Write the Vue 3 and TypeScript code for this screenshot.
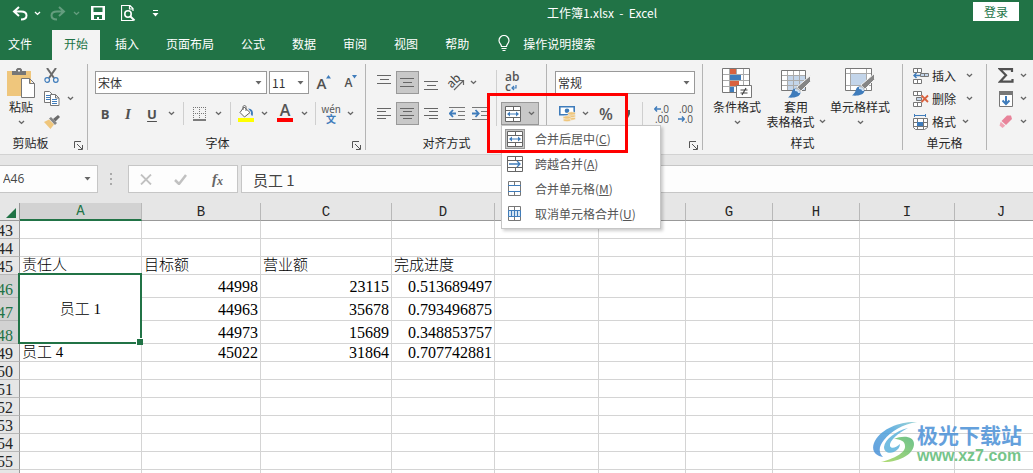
<script setup lang="ts">
import { ref } from 'vue'

interface SheetRow {
  n: number
  tall?: boolean
  selected?: boolean
  a?: string
  span?: number
  covered?: boolean
  cells: string[]
  heading?: boolean
}

const tabs = ['插入', '页面布局', '公式', '数据', '审阅', '视图', '帮助']
const columns = ['A', 'B', 'C', 'D', '', '', 'G', 'H', 'I', 'J']
const fontName = ref('宋体')
const fontSize = ref('11')
const numberFormat = ref('常规')
const cellName = ref('A46')
const formula = ref('员工 1')

const mergeItems = [
  { icon: 'merge-center', text: '合并后居中', key: 'C', active: true },
  { icon: 'merge-across', text: '跨越合并', key: 'A', active: false },
  { icon: 'merge-cells', text: '合并单元格', key: 'M', active: false },
  { icon: 'unmerge', text: '取消单元格合并', key: 'U', active: false },
]

const blank = (n: number): SheetRow => ({ n, cells: ['', '', ''] })
const rows: SheetRow[] = [
  blank(43),
  blank(44),
  { n: 45, a: '责任人', cells: ['目标额', '营业额', '完成进度'], heading: true },
  { n: 46, a: '员工 1', span: 3, tall: true, selected: true, cells: ['44998', '23115', '0.513689497'] },
  { n: 47, covered: true, tall: true, selected: true, cells: ['44963', '35678', '0.793496875'] },
  { n: 48, covered: true, tall: true, selected: true, cells: ['44973', '15689', '0.348853757'] },
  { n: 49, a: '员工 4', cells: ['45022', '31864', '0.707742881'] },
  ...[50, 51, 52, 53, 54, 55].map(blank),
]
</script>

<template>
  <div class="excel">
    <svg class="defs" aria-hidden="true">
      <symbol id="chev" viewBox="0 0 7 5"><path d="M1 1l2.5 2.4L6 1" fill="none" stroke="currentColor" stroke-width="1.4" /></symbol>
      <symbol id="tri" viewBox="0 0 7 4"><path d="M0.5 0h6L3.5 3.6z" fill="currentColor" /></symbol>
      <symbol id="launch" viewBox="0 0 9 9">
        <path d="M0.5 7V0.5H7M3 3l5 5M8.500 4v4.500H4" fill="none" stroke="#555" />
      </symbol>
      <symbol id="merge-center" viewBox="0 0 16 16">
        <path d="M0.5 0.500h15v15h-15zM0.500 4.500h15M0.500 11.500h15M8.500 0.500v4M8.500 11.500v4" fill="#fff" stroke="#666" />
        <path d="M3 8h10" stroke="#3f7cbb" /><path d="M2 8l3-2.500v5zM14 8l-3-2.500v5z" fill="#3f7cbb" />
      </symbol>
      <symbol id="merge-across" viewBox="0 0 16 16">
        <path d="M0.500 0.500h15v15h-15zM0.500 4.500h15M0.500 11.500h15M8.500 0.500v4M8.500 11.500v4" fill="#fff" stroke="#666" />
        <path d="M2 8h11M10 5l3 3-3 3" fill="none" stroke="#3f7cbb" stroke-width="1.300" />
      </symbol>
      <symbol id="merge-cells" viewBox="0 0 16 16">
        <path d="M1.500 0.500h12v14h-12zM7.500 0.500v4M7.500 10.500v4" fill="#fff" stroke="#777" />
        <path d="M1 4.500h13M1 10.500h13" stroke="#3f7cbb" />
      </symbol>
      <symbol id="unmerge" viewBox="0 0 16 16">
        <path d="M1.500 0.500h12v14h-12zM7.500 0.500v14" fill="#fff" stroke="#777" />
        <path d="M1.500 4.500h12v6h-12zM4.500 4.500v6M7.500 4.500v6M10.500 4.500v6" fill="#d5e5f4" stroke="#3f7cbb" />
      </symbol>
      <symbol id="brush" viewBox="0 0 23 23">
        <path d="M22.500 0.500v6L13 16l-4-4z" fill="#858585" stroke="#f3f3f3" />
        <path d="M9 12l4 4-2 2-4-4z" fill="#b9b9b9" />
        <path d="M7.500 13.500c-3 0-3.500 3-4 4.500S1.500 21 0 22.500c5 .5 12 0 12.500-5z" fill="#3f7cbb" />
        <path d="M7 15c2 0 4 1 4 3" stroke="#cfe2f5" stroke-width="2" fill="none" />
      </symbol>
    </svg>

    <header class="titlebar">
      <div class="quick">
        <button aria-label="撤消">
          <svg width="16" height="15"><path d="M7 1L2 5.500 7 10M2 5.500h7c3.500 0 5.500 1.500 5.500 4S12.500 13.500 9 13.500" fill="none" stroke="#fff" stroke-width="2" /></svg>
        </button>
        <button aria-label="撤消选项"><svg class="chev"><use href="#chev" /></svg></button>
        <button aria-label="恢复" class="dim">
          <svg width="16" height="15"><path d="M9 1l5 4.500L9 10M14 5.500H7c-3.500 0-5.500 1.500-5.500 4S3.500 13.500 7 13.500" fill="none" stroke="#fff" stroke-width="2" /></svg>
        </button>
        <button aria-label="恢复选项" class="dim"><svg class="chev"><use href="#chev" /></svg></button>
        <button aria-label="保存">
          <svg width="14" height="14"><path d="M0 0h14v14H0z" fill="#fff" /><path d="M2.500 1.500h9v4.500h-9zM3 9h8v4H8v-2H6v2H3z" fill="#217346" /></svg>
        </button>
        <button aria-label="打印预览">
          <svg width="15" height="17" fill="none" stroke="#fff"><path d="M4 15.500H0.500V0.500h8.500l3 3V6M8.500 0.500v3.500H12M4 15.500h8" stroke-width="1.200" /><circle cx="7" cy="9" r="3.200" stroke-width="1.600" /><path d="M9.500 11.500l4 4" stroke-width="2" /></svg>
        </button>
        <button aria-label="自定义快速访问工具栏">
          <svg width="7" height="7"><path d="M1 0h5v1H1zM0.500 3h6L3.500 6.500z" fill="#fff" /></svg>
        </button>
      </div>
      <h1>工作簿1.xlsx&nbsp; -&nbsp; Excel</h1>
      <button class="login">登录</button>
    </header>

    <nav class="tabs">
      <button class="file">文件</button>
      <button class="active">开始</button>
      <button v-for="t in tabs" :key="t">{{ t }}</button>
      <button class="tell">
        <svg width="12" height="17" fill="none" stroke="#fff"><path d="M3.500 11.500C3.500 9 1 8.500 1 5.500a5 5 0 0 1 10 0c0 3-2.500 3.500-2.500 6zM3.500 13.500h5M4.500 15.500h3" stroke-width="1.200" /></svg>
        <span>操作说明搜索</span>
      </button>
    </nav>

    <section class="ribbon">
      <div class="group clip">
        <div class="body">
          <button class="big">
            <svg width="28" height="30">
              <path d="M0 3h24v25H0z" fill="#efc67c" /><path d="M5 7V3h4V1.500L10.500 0h3L15 1.500V3h4v4z" fill="#777" /><path d="M11 2h2v1.500h-2z" fill="#f3f3f3" />
              <path d="M14.500 10.500h8l5 5v14h-13zM22.500 10.500v5h5" fill="#fff" stroke="#777" />
            </svg>
            <span>粘贴</span>
            <svg class="chev"><use href="#chev" /></svg>
          </button>
          <div class="stack">
            <button aria-label="剪切">
              <svg width="15" height="15" fill="none"><path d="M3 0l7 10M12 0L5 10" stroke="#6b6b6b" stroke-width="2" /><circle cx="3.200" cy="12" r="2.300" stroke="#3f7cbb" stroke-width="1.200" /><circle cx="11.800" cy="12" r="2.300" stroke="#3f7cbb" stroke-width="1.200" /></svg>
            </button>
            <button aria-label="复制" class="split">
              <svg width="16" height="15"><path d="M0.500 0.500h5l3 3v8h-8z" fill="#fff" stroke="#777" /><path d="M2 4.500h4M2 6.500h4M2 8.500h4" stroke="#3f7cbb" /><path d="M6.500 3.500h5l3.500 3.500v7.500H6.500zM11.500 3.500V7H15" fill="#fff" stroke="#777" /><path d="M8 8.500h5M8 10.500h5M8 12.500h5" stroke="#3f7cbb" /></svg>
              <svg class="chev"><use href="#chev" /></svg>
            </button>
            <button aria-label="格式刷">
              <svg width="16" height="14"><path d="M0 7l5-2.500 5 5L6.500 14z" fill="#efc67c" /><path d="M5 3.500l2-1.500 6 6-2 2z" fill="#858585" /><path d="M9 4l5-4 2 2-4.500 4.500z" fill="#6b6b6b" /></svg>
            </button>
          </div>
        </div>
        <footer><span>剪贴板</span><button aria-label="剪贴板设置"><svg width="9" height="9"><use href="#launch" /></svg></button></footer>
      </div>

      <div class="group font">
        <div class="lines">
          <div class="line fields">
            <label class="combo">
              <select v-model="fontName" aria-label="字体"><option>宋体</option></select>
              <svg class="tri"><use href="#tri" /></svg>
            </label>
            <label class="combo">
              <select v-model="fontSize" aria-label="字号"><option>11</option></select>
              <svg class="tri"><use href="#tri" /></svg>
            </label>
            <button class="grow" aria-label="增大字号">A<svg width="5" height="4"><path d="M0 3.500L2.500 0 5 3.500z" fill="#3f7cbb" /></svg></button>
            <button class="grow less" aria-label="减小字号">A<svg width="5" height="4"><path d="M0 0h5L2.500 3.500z" fill="#3f7cbb" /></svg></button>
          </div>
          <div class="line font-tools">
            <button class="letter">B</button>
            <button class="letter italic">I</button>
            <button class="letter under">U</button>
            <button aria-label="下划线选项"><svg class="chev"><use href="#chev" /></svg></button>
            <i class="bar"></i>
            <button aria-label="边框"><svg width="13" height="14" fill="none" stroke="#777"><path d="M0.500 0v12M6.500 0v12M12.500 0v12M0 0.500h13M0 6.500h13" stroke-dasharray="1 1" /><path d="M0 13h13" stroke="#555" stroke-width="1.500" /></svg></button>
            <button aria-label="边框选项"><svg class="chev"><use href="#chev" /></svg></button>
            <i class="bar"></i>
            <button aria-label="填充颜色"><svg width="17" height="17"><path d="M6 2l6 5.500-5.500 4.500L2 7.500z" fill="#fff" stroke="#666" /><path d="M5 5V2c0-2 3-2 3 0v4" fill="none" stroke="#666" /><path d="M10 3.500c4 0 6 3 4.500 7.500-1.500-.5-2-2-1.500-4z" fill="#3f7cbb" /><path d="M0 13h16v4H0z" fill="#ff0" /></svg></button>
            <button aria-label="填充颜色选项"><svg class="chev"><use href="#chev" /></svg></button>
            <button class="colour" aria-label="字体颜色">A</button>
            <button aria-label="字体颜色选项"><svg class="chev"><use href="#chev" /></svg></button>
            <i class="bar"></i>
            <button class="pinyin"><span>wén</span><b>文</b></button>
            <button aria-label="拼音选项"><svg class="chev"><use href="#chev" /></svg></button>
          </div>
        </div>
        <footer><span>字体</span><button aria-label="字体设置"><svg width="9" height="9"><use href="#launch" /></svg></button></footer>
      </div>

      <div class="group align">
        <div class="body">
          <div class="align-tools">
            <button aria-label="顶端对齐"><svg width="15" height="15" stroke="#666"><path d="M0 0.500h14M3 4.500h9M0 8.500h14" /></svg></button>
            <button aria-label="垂直居中" class="on"><svg width="15" height="15" stroke="#666"><path d="M0 3.500h14M3 7.500h9M0 11.500h14" /></svg></button>
            <button aria-label="底端对齐"><svg width="15" height="15" stroke="#666"><path d="M0 6.500h14M3 10.500h9M0 14.500h14" /></svg></button>
            <button aria-label="方向"><svg class="turn" width="17" height="16"><text x="0" y="11" font-size="12" fill="#444" transform="rotate(-45 5 8)">ab</text><path d="M6 15l9-9M11 5.500h4.500V10" fill="none" stroke="#666" stroke-width="1.200" /></svg></button>
            <button aria-label="方向选项" class="start"><svg class="chev"><use href="#chev" /></svg></button>
            <button aria-label="左对齐"><svg width="15" height="13" stroke="#666"><path d="M0 1h14M0 4.500h9M0 8h14M0 11.500h9" shape-rendering="crispEdges" /></svg></button>
            <button aria-label="居中" class="on"><svg width="15" height="13" stroke="#666"><path d="M0 1h14M3 4.500h9M0 8h14M3 11.500h9" shape-rendering="crispEdges" /></svg></button>
            <button aria-label="右对齐"><svg width="15" height="13" stroke="#666"><path d="M0 1h14M5 4.500h9M0 8h14M5 11.500h9" shape-rendering="crispEdges" /></svg></button>
            <button aria-label="减少缩进"><svg width="16" height="13"><path d="M0 0.500h16M9 4.500h7M9 8.500h7M0 12.500h16" stroke="#777" /><path d="M1 6.500h6M4 3L0.800 6.500 4 10" stroke="#3f7cbb" stroke-width="1.800" fill="none" /></svg></button>
            <button aria-label="增加缩进"><svg width="16" height="13"><path d="M0 0.500h16M9 4.500h7M9 8.500h7M0 12.500h16" stroke="#777" /><path d="M0 6.500h6M3.500 3L6.700 6.500 3.500 10" stroke="#3f7cbb" stroke-width="1.800" fill="none" /></svg></button>
          </div>
          <i class="bar long"></i>
          <div class="merge-col">
            <button class="wrap" aria-label="自动换行"><span>ab</span><span>c<svg width="6" height="8"><path d="M5 1v3H1M3 2L1 4l2 2" fill="none" stroke="#3f7cbb" stroke-width="1.200" /></svg></span></button>
            <div class="merge">
              <button class="on" aria-label="合并后居中" aria-expanded="true">
                <svg width="16" height="16"><use href="#merge-center" /></svg>
                <svg class="chev"><use href="#chev" /></svg>
              </button>
              <div class="menu" role="menu">
                <button v-for="m in mergeItems" :key="m.key" role="menuitem">
                  <span class="pic" :class="{ chosen: m.active }"><svg width="16" height="16"><use :href="'#' + m.icon" /></svg></span>
                  <span>{{ m.text }}(<u>{{ m.key }}</u>)</span>
                </button>
              </div>
              <div class="marker"></div>
            </div>
          </div>
        </div>
        <footer><span>对齐方式</span></footer>
      </div>

      <div class="group number">
        <div class="lines">
          <div class="line">
            <label class="combo">
              <select v-model="numberFormat" aria-label="数字格式"><option>常规</option></select>
              <svg class="tri"><use href="#tri" /></svg>
            </label>
          </div>
          <div class="line number-tools">
            <button aria-label="会计数字格式"><svg width="17" height="16"><path d="M0.800 0.800h14.400v8H0.800z" fill="#fff" stroke="#3f7cbb" stroke-width="1.600" /><circle cx="8" cy="4.800" r="2.300" fill="#3f7cbb" /><g fill="#efc67c" stroke="#f3f3f3" stroke-width=".6"><ellipse cx="12.500" cy="12.500" rx="4" ry="1.700" /><ellipse cx="12.500" cy="10" rx="4" ry="1.700" /><ellipse cx="12.500" cy="7.500" rx="4" ry="1.700" /><ellipse cx="8" cy="14" rx="4" ry="1.700" /><ellipse cx="8" cy="11.500" rx="4" ry="1.700" /></g></svg></button>
            <button aria-label="会计格式选项"><svg class="chev"><use href="#chev" /></svg></button>
            <button class="percent">%</button>
            <button class="comma" aria-label="千位分隔样式"><svg width="6" height="8"><path d="M1 0h4v4L3 8H1l1-4H1z" fill="#555" /></svg></button>
            <i class="bar"></i>
            <button class="dec" aria-label="增加小数位数"><span><svg width="7" height="6"><path d="M0.500 3H7M3 0.500L0.800 3 3 5.500" fill="none" stroke="#3f7cbb" stroke-width="1.400" /></svg>.0</span><span>.00</span></button>
            <button class="dec" aria-label="减少小数位数"><span>.00</span><span><svg width="7" height="6"><path d="M0 3h6.500M4 0.500L6.200 3 4 5.500" fill="none" stroke="#3f7cbb" stroke-width="1.400" /></svg>.0</span></button>
          </div>
        </div>
        <footer><span></span><button aria-label="数字设置"><svg width="9" height="9"><use href="#launch" /></svg></button></footer>
      </div>

      <div class="group styles">
        <div class="body">
          <button class="big">
            <svg width="30" height="30">
              <path d="M0.500 0.500h27v24H0.500z" fill="#fff" /><path d="M8 1h6v5H8zM8 13h9v5H8z" fill="#d9623f" /><path d="M8 7h11v5H8zM8 19h4v5H8z" fill="#3f7cbb" />
              <path d="M7.500 0v25M14.500 0v6M21.500 0v24M0 6.500h28M0 12.500h28M0 18.500h28" stroke="#aaa" fill="none" /><path d="M0.500 0.500h27v24H0.500z" fill="none" stroke="#777" />
              <path d="M14.500 17.500h15v12h-15z" fill="#fff" stroke="#777" /><path d="M18.500 22h7M18.500 25h7M24 20l-4 7" stroke="#444" stroke-width="1.200" />
            </svg>
            <span>条件格式</span>
            <svg class="chev"><use href="#chev" /></svg>
          </button>
          <button class="big">
            <svg width="30" height="30">
              <path d="M0.500 2.500h24v20H0.500z" fill="#fff" /><path d="M7 8h17v14H7z" fill="#c3d5ea" /><path d="M6.500 3v19M12.500 3v19M18.500 3v19M1 7.500h23M1 12.500h23M1 17.500h23" stroke="#aaa" fill="none" /><path d="M0.500 2.500h24v20H0.500z" fill="none" stroke="#777" />
              <use href="#brush" x="7" y="7" width="23" height="23" />
            </svg>
            <span>套用</span>
            <span class="with-chev">表格格式<svg class="chev"><use href="#chev" /></svg></span>
          </button>
          <button class="big">
            <svg width="30" height="30">
              <path d="M0.500 0.500h26v22H0.500z" fill="#fff" /><path d="M6 6h15v11H6z" fill="#c3d5ea" /><path d="M5.500 1v21M21.500 1v21M1 5.500h25M1 17.500h25" stroke="#aaa" fill="none" /><path d="M0.500 0.500h26v22H0.500z" fill="none" stroke="#777" />
              <use href="#brush" x="7" y="5" width="23" height="23" />
            </svg>
            <span>单元格样式</span>
            <svg class="chev"><use href="#chev" /></svg>
          </button>
        </div>
        <footer><span>样式</span></footer>
      </div>

      <div class="group cells">
        <div class="stack">
          <button>
            <svg width="16" height="16" fill="#fff" stroke="#777"><path d="M0.500 0.500h8v4h-8zM4.500 0.500v4M0.500 11.500h8v4h-8zM4.500 11.500v4" /><path d="M7.500 5.500h8v3h-8zM11.500 5.500v3" fill="#c3d5ea" /><path d="M1 7.500h6M3.500 5L1 7.500 3.500 10" fill="none" stroke="#3f7cbb" stroke-width="1.500" /></svg>
            <span>插入</span><svg class="chev"><use href="#chev" /></svg>
          </button>
          <button>
            <svg width="16" height="16" fill="#fff" stroke="#777"><path d="M0.500 0.500h8v4h-8zM4.500 0.500v4M0.500 11.500h8v4h-8zM4.500 11.500v4" /><path d="M3.500 6.500h5v3h-5z" fill="#c3d5ea" /><path d="M8.500 4.500l6.500 6.500M15 4.500l-6.500 6.500" fill="none" stroke="#d9623f" stroke-width="1.800" /></svg>
            <span>删除</span><svg class="chev"><use href="#chev" /></svg>
          </button>
          <button>
            <svg width="16" height="16" fill="none" stroke="#777"><path d="M0.500 4.500h14v9l-3 2h-9l-2-2z" fill="#fff" /><path d="M4.500 4v11M10.500 4v11M0 8.500h15M0 12.500h15" /><path d="M4 8h6v4H4z" fill="#3f7cbb" stroke="none" /><path d="M1.500 0v3M12.500 0v3M2 1.500h10" stroke="#3f7cbb" /></svg>
            <span>格式</span><svg class="chev"><use href="#chev" /></svg>
          </button>
        </div>
        <footer><span>单元格</span></footer>
      </div>

      <div class="group edit">
        <div class="stack">
          <button aria-label="自动求和"><svg width="16" height="15"><path d="M14 4V1.200H2L8 7.300 2 13.700h12.500V11" fill="none" stroke="#505050" stroke-width="2.200" /></svg><svg class="chev"><use href="#chev" /></svg></button>
          <button aria-label="填充"><svg width="16" height="16"><path d="M1.500 0.500h13v15h-13z" fill="#fff" stroke="#777" /><path d="M1 0h14v4H1z" fill="#777" /><path d="M8 5v8M4.500 9.500L8 13l3.500-3.500" fill="none" stroke="#3f7cbb" stroke-width="2" /></svg><svg class="chev"><use href="#chev" /></svg></button>
          <button aria-label="清除"><svg width="16" height="14"><path d="M9 0.500h4L14 4l-6 6-4.500-4z" fill="#e8839a" /><path d="M2.700 6.800l4.500 4L4.500 13 1.500 10.500z" fill="#f0a3b4" /></svg><svg class="chev"><use href="#chev" /></svg></button>
        </div>
      </div>
    </section>

    <section class="formula">
      <div class="name-box">
        <input v-model="cellName" aria-label="名称框" />
        <button aria-label="名称列表"><svg class="tri"><use href="#tri" /></svg></button>
      </div>
      <svg class="grip" width="3" height="12" fill="#aaa"><path d="M0 0h2v2H0zM0 5h2v2H0zM0 10h2v2H0z" /></svg>
      <div class="fx">
        <button aria-label="取消"><svg width="12" height="11"><path d="M1 0.500l10 10M11 0.500l-10 10" stroke="#c1c1c1" stroke-width="1.800" /></svg></button>
        <button aria-label="输入"><svg width="13" height="11"><path d="M1 6l4 4 7-9" fill="none" stroke="#c1c1c1" stroke-width="2.500" /></svg></button>
        <button class="fn">f<small>x</small></button>
      </div>
      <input v-model="formula" class="content" aria-label="编辑栏" />
    </section>

    <main class="sheet">
      <table>
        <colgroup>
          <col class="w-h" /><col class="w-a" /><col class="w-b" /><col class="w-c" /><col class="w-d" /><col class="w-e" />
          <col class="w-f" /><col class="w-f" /><col class="w-f" /><col class="w-i" /><col />
        </colgroup>
        <thead>
          <tr>
            <th class="corner"><svg width="10" height="10"><path d="M10 0v10H0z" fill="#217346" /></svg></th>
            <th v-for="(c, i) in columns" :key="i" scope="col" :class="{ sel: c === 'A' }">{{ c }}</th>
          </tr>
        </thead>
        <tbody>
          <tr v-for="r in rows" :key="r.n" :class="{ tall: r.tall, heading: r.heading }">
            <th scope="row" :class="{ sel: r.selected }"><div>{{ r.n }}</div></th>
            <td v-if="!r.covered" :rowspan="r.span ?? 1" :class="{ merged: r.span }">
              {{ r.a }}
              <span v-if="r.span" class="selection"></span>
            </td>
            <td v-for="(v, i) in r.cells" :key="i" class="value">{{ v }}</td>
            <td v-for="k in 6" :key="'e' + k"></td>
          </tr>
          <tr><th></th><td v-for="k in 10" :key="k"></td></tr>
        </tbody>
      </table>
    </main>

    <div class="brand">
      <svg width="46" height="42" viewBox="0 0 46 42">
        <defs>
          <linearGradient id="sky" x1="0" y1="1" x2="1" y2="0"><stop offset="0" stop-color="#4a8fd8" /><stop offset=".6" stop-color="#4fa5dc" /><stop offset="1" stop-color="#8fd0cf" /></linearGradient>
          <linearGradient id="leaf" x1="0" y1="1" x2="1" y2="0"><stop offset="0" stop-color="#a5d65b" /><stop offset="1" stop-color="#55b879" /></linearGradient>
        </defs>
        <path d="M45 0C28-1 8 7 2 21c-3 8 2 13 9 14-5-5-4-11 1-17C19 9 31 2 45 0z" fill="url(#sky)" />
        <path d="M36 6C24 9 13 17 12 25c0 5 5 7 10 5 4-2 6-5 6-8-4 4-9 5-10 2-1-5 8-13 18-18z" fill="#5bb2dc" />
        <path d="M22 17c9-4 20-3 20 5 0 10-15 19-33 18C21 37 34 31 33 24c0-5-5-7-11-7z" fill="url(#leaf)" />
      </svg>
      <div><strong>极光下载站</strong><span>www.xz7.com</span></div>
    </div>
  </div>
</template>

<style>
html, body { margin: 0; overflow: hidden; }
</style>

<style scoped>
.excel {
  position: relative;
  height: 100vh;
  overflow: hidden;
  background: #fff;
  color: #262626;
  font: 12px/15px "Noto Sans CJK SC", "Open Sans", sans-serif;
}
* { box-sizing: border-box; }
.defs { position: absolute; width: 0; height: 0; }
button, input, select { margin: 0; padding: 0; border: 0; background: none; font: inherit; color: inherit; border-radius: 0; outline: 0; }
button { display: flex; align-items: center; justify-content: center; white-space: nowrap; }
svg { display: block; flex: none; }
.chev { width: 7px; height: 5px; color: #666; }
.tri { width: 7px; height: 4px; color: #666; }

.titlebar { display: grid; grid-template-columns: 231px 1fr 60px; height: 30px; background: #217346; color: #fff; }
.quick { display: grid; grid-template-columns: 24px 10px 32px 5px 38px 22px 32px; padding-left: 8px; height: 26px; }
.quick .chev { color: #fff; }
.dim { opacity: .3; }
h1 { margin: 0; font: inherit; line-height: 26px; text-align: center; }
.login { width: 46px; height: 19px; margin-top: 2px; background: #fff; color: #217346; }

.tabs { display: flex; gap: 3px; height: 30px; background: #217346; color: #fff; }
.tabs button { padding: 0 12px 3px; }
.tabs .file { padding: 0 17px 3px 8px; }
.tabs .active { background: #f3f3f3; color: #217346; }
.tabs .tell { gap: 13px; padding-left: 14px; }

.ribbon { display: flex; height: 95px; padding: 4px 0; background: #f3f3f3; border-bottom: 1px solid #d2d2d2; }
.group { display: flex; flex-direction: column; flex: none; border-right: 1px solid #b4b4b4; }
.body { display: flex; flex: 1; }
.group > .stack { flex: 1; }
.clip { width: 88px; }
.font { width: 278px; }
.align { width: 181px; }
.number { width: 156px; }
.styles { width: 200px; }
.cells { width: 84px; }
.edit { flex: 1; border: 0; }
footer { display: flex; height: 14px; line-height: 14px; }
footer span { flex: 1; text-align: center; }
footer button { width: 18px; padding-top: 4px; }
.clip footer span { padding-right: 8px; }
.align footer { padding-right: 19px; }
.big { flex-direction: column; justify-content: flex-start; padding-top: 4px; height: 72px; }
.big span { height: 15px; }
.big > svg + span { margin-top: 1px; }
.big > .chev { margin-top: 6px; }
.with-chev { display: flex; align-items: center; gap: 4px; }
.clip .big { width: 42px; }
.stack { display: flex; flex-direction: column; }
.stack button { height: 23px; justify-content: flex-start; gap: 7px; }
.clip .stack button { padding-left: 2px; }
.styles .body { padding-left: 8px; gap: 1px; }
.styles .big:nth-child(1) { width: 52px; }
.styles .big:nth-child(2) { width: 64px; }
.styles .big:nth-child(3) { width: 62px; }
.cells button { padding-left: 10px; gap: 3px; }
.cells .chev { margin-left: 3px; }
.cells button:nth-child(-n+2) .chev { margin-left: 7px; }
.edit button { padding-left: 11px; gap: 6px; }

.lines { display: flex; flex-direction: column; flex: 1; gap: 8px; padding: 7px 7px 0; }
.line { display: grid; height: 23px; }
.fields { grid-template-columns: 172px 40px 26px 24px; gap: 2px; }
.combo { display: grid; align-items: center; background: #fff; border: 1px solid #999; }
.combo > * { grid-area: 1 / 1; }
.combo select { appearance: none; width: 100%; height: 21px; padding-left: 2px; line-height: 21px; color: #333; font-size: 12px; }
.combo .tri { justify-self: end; margin-right: 4px; pointer-events: none; }
.grow { align-items: center; color: #505050; font: 600 15px/20px "Open Sans", sans-serif; }
.grow svg { align-self: flex-start; margin-top: 4px; }
.less { font-size: 12px; }
.font-tools { grid-template-columns: 20px 26px 22px 16px 9px 22px 16px 9px 22px 14px 28px 10px 12px 20px 18px; }
.letter { color: #505050; font: 700 13px/20px "Open Sans", sans-serif; }
.italic { font-family: "Liberation Serif", serif; font-style: italic; font-size: 15px; }
.under { text-decoration: underline; text-underline-offset: 2px; }
.bar { align-self: stretch; justify-self: center; width: 1px; background: #cfcfcf; }
.colour { justify-self: center; width: 16px; height: 20px; border-bottom: 4px solid #f00; color: #555; font: 600 16px/16px "Open Sans", sans-serif; }
.pinyin { flex-direction: column; color: #555; font-size: 10px; line-height: 10px; }
.pinyin b { color: #3f7cbb; font-size: 10px; line-height: 10px; }

.align-tools { display: grid; grid-template-columns: 24px 23px 25px 25px 22px; grid-template-rows: 23px 23px; gap: 8px 0; padding: 7px 0 0 6px; }
.turn { overflow: visible; }
.on { background: #c8c8c8; border: 1px solid #999; }
.start { justify-content: flex-start; padding-left: 1px; }
.long { height: 56px; margin: 6px 4px 0 5px; align-self: flex-start; }
.merge-col { display: flex; flex-direction: column; gap: 8px; padding-top: 7px; }
.wrap { flex-direction: column; align-items: flex-start; width: 22px; height: 23px; color: #555; font: 600 12px/10px "Open Sans", sans-serif; padding: 0 0 2px 4px; }
.wrap span { display: flex; align-items: flex-end; }
.merge { position: relative; }
.merge > .on { width: 38px; height: 23px; gap: 7px; }
.menu {
  position: absolute; z-index: 2; top: 23px; left: 0; width: 160px; padding: 0 1px 2px;
  background: #fff; border: 1px solid #c6c6c6; box-shadow: 2px 2px 3px #0003;
}
.menu button { width: 100%; height: 25px; justify-content: flex-start; gap: 10px; padding-left: 2px; color: #555; }
.pic { display: grid; place-items: center; width: 20px; height: 20px; }
.chosen { background: #c8c8c8; outline: 1px solid #999; outline-offset: -1px; }
.marker { position: absolute; z-index: 3; top: -9px; left: -14px; width: 141px; height: 60px; border: 3px solid #f00; pointer-events: none; }

.number .lines { padding: 7px 7px 0 8px; }
.number-tools { grid-template-columns: 24px 12px 30px 14px 14px 20px 24px; }
.percent { color: #555; font: 600 16px/20px "Open Sans", sans-serif; }
.dec { flex-direction: column; align-items: flex-end; color: #505050; font: 10px/10px "Open Sans", sans-serif; }
.dec span { display: flex; align-items: center; }

.formula { display: flex; align-items: center; height: 48px; padding: 0; background: #e6e6e6; color: #444; }
.name-box, .fx, .content { height: 28px; background: #fdfdfd; border: 1px solid #c6c6c6; }
.name-box { display: flex; width: 98px; border-left: 0; }
.name-box input { flex: 1; min-width: 0; padding-left: 3px; font: 12px/26px "Open Sans", sans-serif; }
.name-box button { width: 20px; }
.grip { margin: 0 15px 0 12px; }
.fx { display: flex; justify-content: space-around; width: 110px; }
.fn { color: #666; font: italic 700 15px/20px "Liberation Serif", serif; padding: 0 3px; }
.fn small { font-size: 12px; align-self: flex-end; line-height: 22px; }
.content { flex: 1; min-width: 0; margin-left: 3px; padding-left: 11px; border-right: 0; font-size: 15px; line-height: 26px; }

.sheet { overflow: hidden; }
table { table-layout: fixed; width: calc(100% + 15px); border-collapse: separate; border-spacing: 0; }
.w-h { width: 20px; }
.w-a { width: 122px; }
.w-b { width: 119px; }
.w-c { width: 131px; }
.w-d { width: 103px; }
.w-e { width: 104px; }
.w-f { width: 87px; }
.w-i { width: 95px; }
th, td { height: 18px; padding: 0 2px; border-right: 1px solid #d4d4d4; border-bottom: 1px solid #d4d4d4; line-height: 17px; white-space: nowrap; }
td { color: #000; font-family: "Liberation Serif", "Noto Sans CJK SC", serif; font-size: 15px; font-weight: 300; text-align: left; }
th { background: #e6e6e6; color: #262626; font: 14px/17px "Liberation Mono", monospace; text-align: center; }
thead th { padding-top: 1px; line-height: 16px; border-color: #999; border-right-color: #b8b8b8; }
thead .corner { padding: 3px 3px 0 6px; border-right-color: #999; }
thead .sel { border-bottom: 2px solid #217346; line-height: 15px; }
th.sel { background: #d2d2d2; color: #217346; }
tbody th { padding: 0; border-right-color: #999; border-bottom-color: #b8b8b8; font: 16px/17px "Liberation Serif", serif; vertical-align: bottom; }
tbody th div { display: flex; justify-content: flex-end; padding-right: 6px; width: 19px; height: 17px; line-height: 20px; }
.tall td, .tall th { height: 23px; }
.value { text-align: right; font-size: 16px; }
.heading .value { text-align: left; font-size: 15px; }
.merged { position: relative; text-align: center; }
.selection { position: absolute; inset: -2px -1px -1px -2px; border: 2px solid #217346; }
.selection::after { content: ""; position: absolute; right: -3px; bottom: -3px; width: 6px; height: 6px; background: #217346; border: solid #fff; border-width: 1px 0 0 1px; }

.brand { position: absolute; right: 11px; bottom: 7px; display: flex; opacity: .85; }
.brand div { display: flex; flex-direction: column; margin-left: -1px; }
.brand strong { color: #4a90d6; font-size: 21px; line-height: 24px; }
.brand span { color: #5dba75; font: 700 16px/20px "Liberation Sans", sans-serif; }
</style>
